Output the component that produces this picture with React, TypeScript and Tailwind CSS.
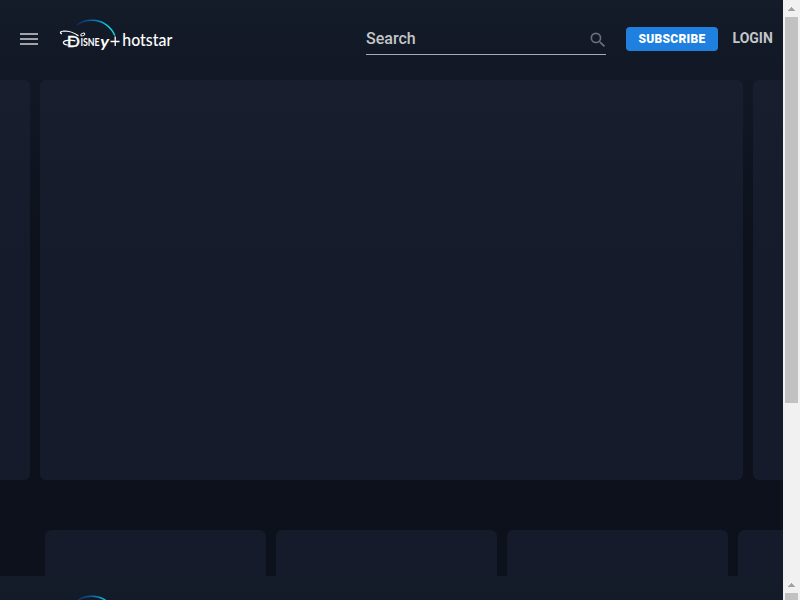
function Arc() {
  return (
    <>
      <defs>
        <linearGradient id="arc" gradientUnits="userSpaceOnUse" x1="17" y1="8" x2="56" y2="18">
          <stop offset="0" stopColor="#15205e" />
          <stop offset="0.45" stopColor="#0878b4" />
          <stop offset="0.8" stopColor="#12d8e4" />
        </linearGradient>
      </defs>
      <path d="M17.5 8.3C22 4.6 27 3.3 33 3.3C43 3.3 51.8 9 55.8 18.5" stroke="url(#arc)" strokeWidth="1.4" />
    </>
  );
}

function Logo() {
  return (
    <svg width="116" height="36" viewBox="0 0 116 36" className="block" fill="none">
      <Arc />
      <path d="M2.5 16.8C.4 15.5 1.5 14.2 5 14C10 14 15 15.6 19 18.6" stroke="#fff" strokeWidth="1.2" strokeLinecap="round" />
      <path d="M8.5 28C3.4 27.5 3.2 24.6 7 23.6C10 22.8 13 23 16 23.8" stroke="#fff" strokeWidth="1.2" strokeLinecap="round" />
      <ellipse cx="23.8" cy="17.5" rx="2.1" ry="1.2" transform="rotate(-22 23.8 17.5)" stroke="#fff" strokeWidth="1" />
      <g fill="#fff" fontFamily="Lato, sans-serif">
        <text x="7.8" y="29.6" fontSize="16" textLength="13.2" lengthAdjust="spacingAndGlyphs" fontWeight="400" stroke="#fff" strokeWidth="0.35">D</text>
        <text x="21.4" y="28.5" fontSize="11" textLength="19.3" lengthAdjust="spacingAndGlyphs" fontWeight="700">ISNE</text>
        <text x="41.2" y="30.2" fontSize="15.5" textLength="8.8" lengthAdjust="spacingAndGlyphs" fontWeight="700" fontStyle="italic">y</text>
        <text x="63.3" y="29" fontSize="16.5" textLength="50" lengthAdjust="spacingAndGlyphs" fontWeight="500">hotstar</text>
      </g>
      <path d="M51.5 24.5H60.5M56.2 19.5V29" stroke="#fff" strokeWidth="1.3" />
    </svg>
  );
}

function Header() {
  return (
    <header className="flex h-20 shrink-0 items-start pl-5">
      <div className="mt-[33px] flex w-[18px] flex-col gap-[3px]">
        <i className="h-0.5 bg-[#a1a3a9]" />
        <i className="h-0.5 bg-[#a1a3a9]" />
        <i className="h-0.5 bg-[#a1a3a9]" />
      </div>
      <div className="mt-[17px] ml-[21px]"><Logo /></div>
      <div className="mt-[23px] ml-[191px] flex h-8 w-60 items-center justify-between border-b border-[#a9abaf]">
        <span className="text-base leading-8 font-medium text-[#c5c6c9]">Search</span>
        <svg width="20" height="20" viewBox="0 0 24 24" fill="#697076" className="-mr-0.5 translate-y-px">
          <path d="M15.5 14h-.79l-.28-.27A6.47 6.47 0 0 0 16 9.5 6.5 6.5 0 1 0 9.5 16c1.61 0 3.09-.59 4.23-1.57l.27.28v.79l5 4.99L20.49 19l-4.99-5zm-6 0A4.5 4.5 0 1 1 14 9.5 4.5 4.5 0 0 1 9.5 14z" />
        </svg>
      </div>
      <button className="mt-[27px] ml-5 h-6 w-[92px] rounded-[4px] bg-[#1f80e0] text-xs leading-6 font-black tracking-[0.3px] text-white">SUBSCRIBE</button>
      <span className="mt-[27px] ml-[14.5px] text-sm leading-[23px] font-bold text-[#c5c6c9]">LOGIN</span>
    </header>
  );
}

function UpArrow() {
  return (
    <svg width="17" height="17" viewBox="0 0 17 17" className="shrink-0" shapeRendering="crispEdges">
      <path d="M8 7h1v1h1v1h1v1h1v1H5v-1h1V9h1V8h1z" fill="#a3a3a3" />
    </svg>
  );
}

function Page() {
  return (
    <div className="flex h-[576px] shrink-0 bg-[#0c111b]">
      <div className="flex w-[783px] flex-col overflow-hidden bg-linear-to-b from-[#141b29] from-0% to-[#0c111b] to-[250px]">
        <Header />
        <div className="-ml-[673px] flex h-[400px] w-[2129px] shrink-0 gap-2.5">
          {[0, 1, 2].map((n) => (
            <div key={n} className="w-[703px] shrink-0 rounded-md bg-linear-to-b from-[#181e2d] to-[#151b2a] to-[180px]" />
          ))}
        </div>
        <div className="mt-[50px] ml-[45px] flex h-[46px] w-[914px] shrink-0 gap-2.5">
          {[0, 1, 2, 3].map((n) => (
            <div key={n} className="w-[221px] shrink-0 rounded-t-md bg-[#151b2a]" />
          ))}
        </div>
      </div>
      <div className="flex w-[17px] flex-col items-center bg-[#f1f1f1]">
        <UpArrow />
        <div className="h-[386px] w-[13px] shrink-0 bg-[#c1c1c1]" />
      </div>
    </div>
  );
}

function NextPageEdge() {
  return (
    <div className="flex h-6 shrink-0">
      <div className="w-[783px] bg-linear-to-b from-[#141b29] to-[#131a28] pt-[17px] pl-[59px]">
        <svg width="116" height="7" viewBox="0 0 116 7" className="block" fill="none"><Arc /></svg>
      </div>
      <div className="flex w-[17px] flex-col items-center bg-[#f1f1f1]">
        <UpArrow />
        <div className="h-[7px] w-[13px] shrink-0 bg-[#c1c1c1]" />
      </div>
    </div>
  );
}

export default function App() {
  return (
    <main className="flex h-[600px] w-[800px] flex-col overflow-hidden font-['Roboto',sans-serif]">
      <Page />
      <NextPageEdge />
    </main>
  );
}
